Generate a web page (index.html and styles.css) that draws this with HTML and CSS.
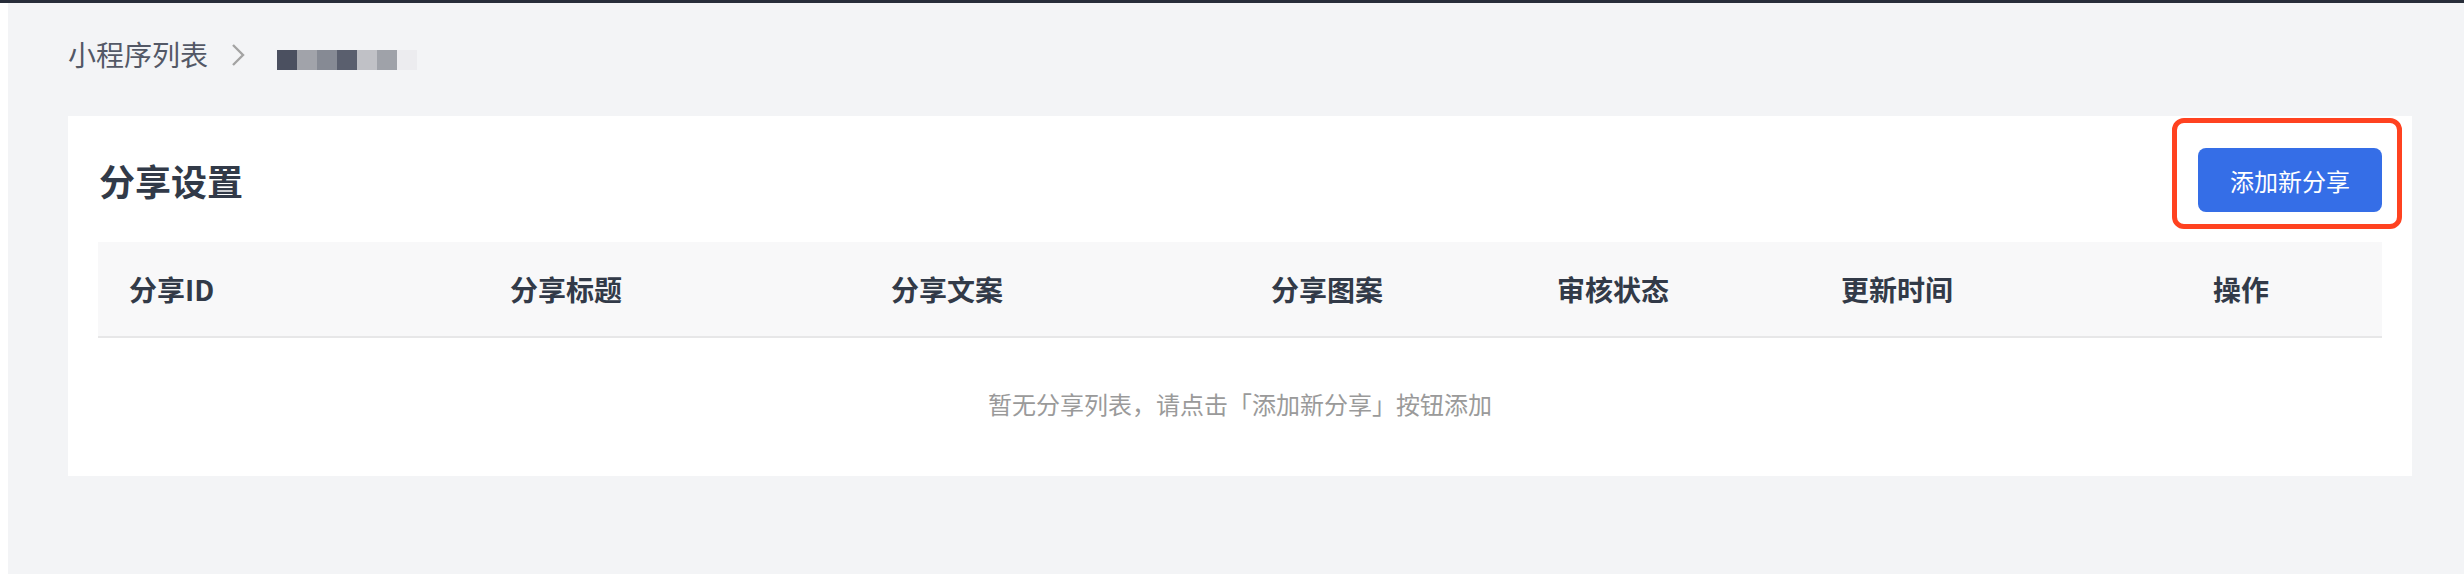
FILE: index.html
```html
<!DOCTYPE html>
<html lang="zh-CN">

<head>
  <meta charset="UTF-8">
  <meta name="viewport" content="width=device-width, initial-scale=1.0">
  <title>分享设置</title>
  <link rel="stylesheet" href="styles.css">
</head>

<body>
  <div class="topbar"></div>
  <div class="layout">
    <div class="sidebar"></div>
    <main class="main">
      <!-- 面包屑 -->
      <nav class="crumbs">
        <span class="crumbs__link">小程序列表</span>
        <svg class="crumbs__sep" width="14" height="24" viewBox="0 0 14 24">
          <polyline points="2,2 12,12 2,22" fill="none" stroke="#a3a3a3" stroke-width="2.4" />
        </svg>
        <span class="crumbs__mask">
          <i style="background:#4b5060"></i>
          <i style="background:#a1a3aa"></i>
          <i style="background:#868a94"></i>
          <i style="background:#5a5f6e"></i>
          <i style="background:#c0c1c6"></i>
          <i style="background:#9fa2a9"></i>
          <i style="background:#ececef"></i>
        </span>
      </nav>

      <!-- 分享设置 -->
      <section class="panel">
        <div class="panel__head">
          <h2 class="panel__title">分享设置</h2>
          <div class="panel__action">
            <button class="btn">添加新分享</button>
          </div>
        </div>

        <div class="table">
          <div class="table__head">
            <div class="table__cell">分享ID</div>
            <div class="table__cell">分享标题</div>
            <div class="table__cell">分享文案</div>
            <div class="table__cell">分享图案</div>
            <div class="table__cell">审核状态</div>
            <div class="table__cell">更新时间</div>
            <div class="table__cell">操作</div>
          </div>
          <div class="table__empty">暂无分享列表，请点击「添加新分享」按钮添加</div>
        </div>
      </section>
    </main>
  </div>
</body>

</html>
```

FILE: styles.css
```css
* {
  margin: 0;
  padding: 0;
  box-sizing: border-box;
}

body {
  font-family: "Noto Sans CJK SC", "Noto Sans", sans-serif;
  color: #323a48;
  background: #ffffff;
  height: 574px;
  overflow: hidden;
}

/* ============= 框架 ============= */
.topbar {
  height: 3px;
  background: #272d39;
}

.layout {
  display: flex;
  height: 571px;
}

.sidebar {
  width: 8px;
  background: #ffffff;
}

.main {
  flex: 1;
  background: #f3f4f6;
  padding: 31px 52px 0 60px;
}

/* ============= 面包屑 ============= */
.crumbs {
  display: flex;
  align-items: flex-start;
  height: 40px;
  margin-bottom: 42px;
}

.crumbs__link {
  font-size: 28px;
  line-height: 40px;
  color: #535866;
}

.crumbs__sep {
  margin: 9px 0 0 23px;
}

.crumbs__mask {
  display: flex;
  margin: 16px 0 0 32px;
}

.crumbs__mask i {
  display: block;
  width: 20px;
  height: 20px;
}

/* ============= 面板 ============= */
.panel {
  background: #ffffff;
  padding: 32px 30px 30px;
}

.panel__head {
  display: flex;
  justify-content: space-between;
  align-items: center;
  height: 64px;
  margin-bottom: 30px;
}

.panel__title {
  font-size: 36px;
  font-weight: 700;
  line-height: 50px;
  padding-left: 1px;
  color: #323a48;
}

.panel__action {
  position: relative;
}

/* 截图上的红色标注框 */
.panel__action::after {
  content: "";
  position: absolute;
  top: -30px;
  left: -26px;
  right: -20px;
  bottom: -17px;
  border: 5px solid #ff4220;
  border-radius: 12px;
}

.btn {
  display: block;
  width: 184px;
  height: 64px;
  border: none;
  border-radius: 8px;
  background: #356ee7;
  color: #ffffff;
  font-family: inherit;
  font-size: 24px;
}

/* ============= 表格 ============= */
.table__head {
  display: grid;
  grid-template-columns: 381px 381px 380px 286px 284px 372px 1fr;
  height: 96px;
  background: #f8f8f9;
  border-bottom: 2px solid #e7e7e8;
}

.table__cell {
  display: flex;
  align-items: center;
  padding-left: 31px;
  font-size: 28px;
  font-weight: 700;
  color: #323a48;
}

.table__empty {
  padding: 48px 0 24px;
  text-align: center;
  font-size: 24px;
  line-height: 36px;
  color: #9a9a9a;
}
```
